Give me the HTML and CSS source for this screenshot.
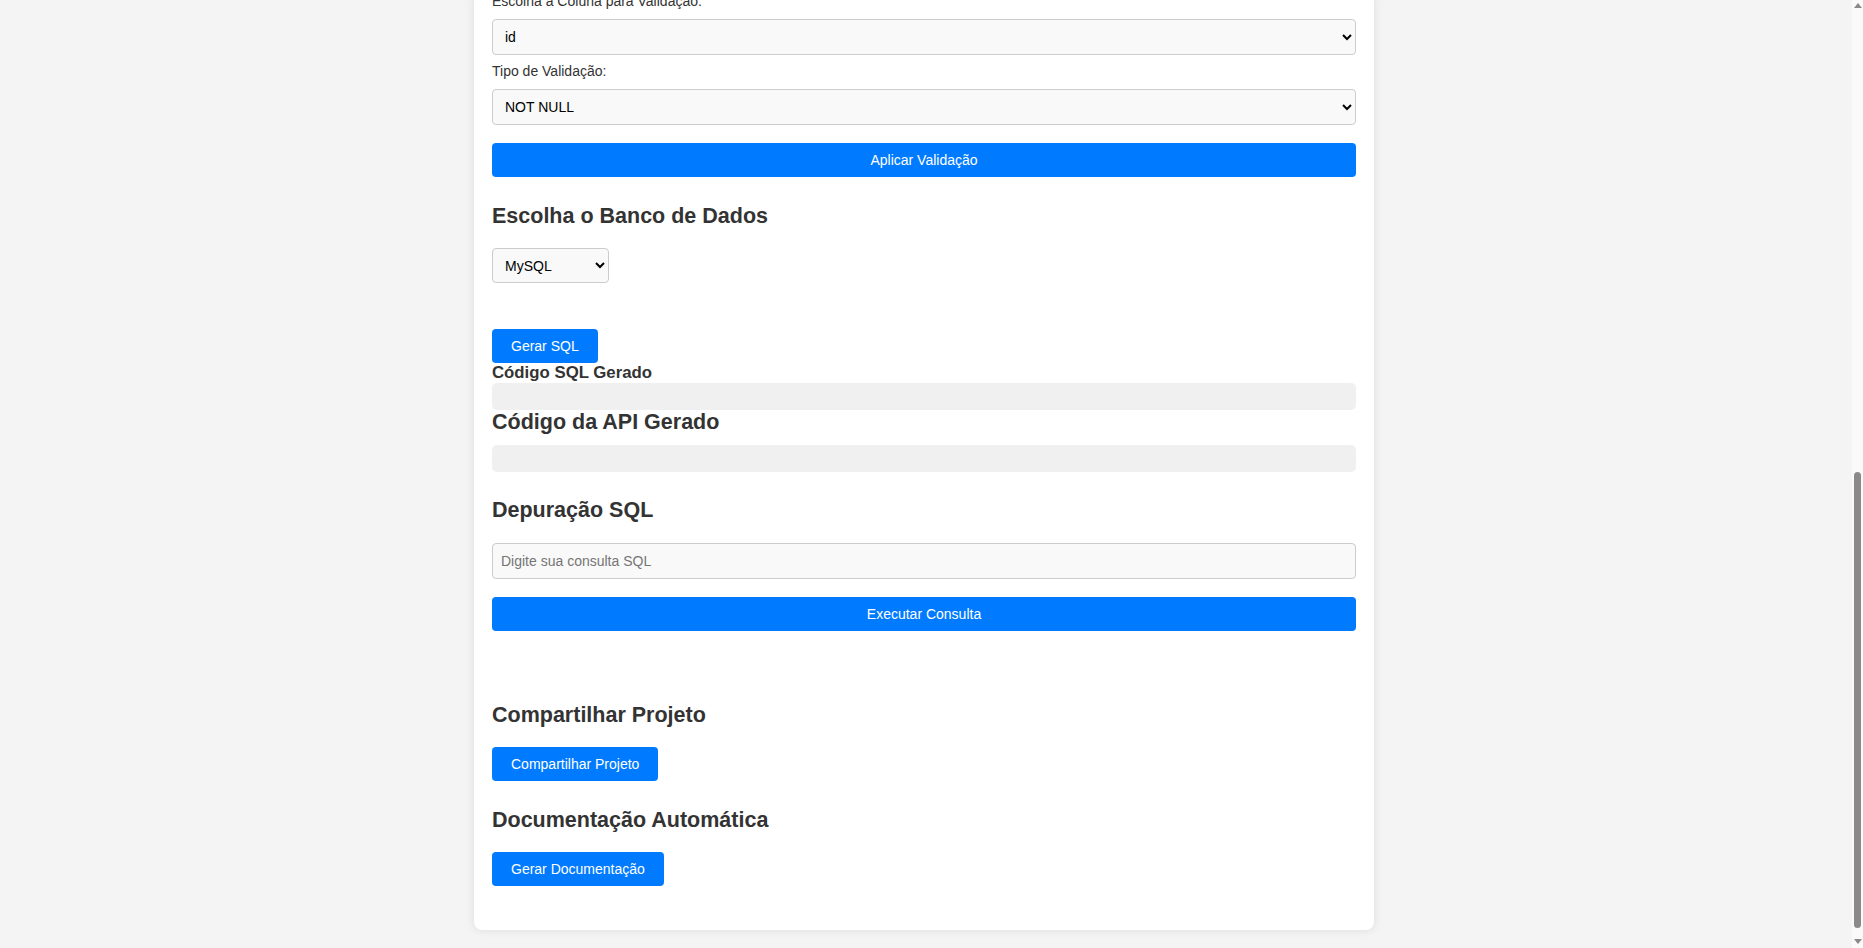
FILE: index.html
```html
<!DOCTYPE html>
<html lang="pt-BR">
<head>
<meta charset="utf-8">
<title>Gerador de API</title>
<link rel="stylesheet" href="styles.css">
</head>
<body>
<div class="viewport">
  <main class="main">
    <div class="card">
      <section class="validation">
        <label class="field-label" for="coluna">Escolha a Coluna para Validação:</label>
        <select id="coluna" class="field field-first">
          <option>id</option>
          <option>nome</option>
        </select>
        <label class="field-label" for="tipo">Tipo de Validação:</label>
        <select id="tipo" class="field field-second">
          <option>NOT NULL</option>
          <option>UNIQUE</option>
        </select>
        <button class="btn btn-block btn-apply">Aplicar Validação</button>
      </section>

      <section class="database">
        <h2 class="title title-db">Escolha o Banco de Dados</h2>
        <select class="field field-db">
          <option>MySQL</option>
          <option>PostgreSQL</option>
          <option>SQLite</option>
        </select>
        <button class="btn btn-sql">Gerar SQL</button>
        <h3 class="subtitle">Código SQL Gerado</h3>
        <pre class="code code-sql"></pre>
        <h2 class="title title-api">Código da API Gerado</h2>
        <pre class="code code-api"></pre>
      </section>

      <section class="debug">
        <h2 class="title title-debug">Depuração SQL</h2>
        <input class="field field-input" type="text" placeholder="Digite sua consulta SQL">
        <button class="btn btn-block btn-run">Executar Consulta</button>
      </section>

      <section class="share">
        <h2 class="title title-share">Compartilhar Projeto</h2>
        <button class="btn btn-share">Compartilhar Projeto</button>
      </section>

      <section class="docs">
        <h2 class="title title-docs">Documentação Automática</h2>
        <button class="btn">Gerar Documentação</button>
      </section>
    </div>
  </main>
  <div class="scrollbar">
    <div class="sb-arrow sb-up"></div>
    <div class="sb-space"></div>
    <div class="sb-thumb"></div>
    <div class="sb-arrow sb-down"></div>
  </div>
</div>
</body>
</html>
```

FILE: styles.css
```css
* {
  box-sizing: border-box;
}

html, body {
  margin: 0;
  padding: 0;
  height: 100%;
  overflow: hidden;
}

body {
  background: #f4f4f4;
  font-family: "Liberation Sans", Arial, sans-serif;
  font-size: 14px;
  color: #333;
}

.viewport {
  display: flex;
  height: 948px;
}

.main {
  flex: 1;
  overflow: hidden;
  display: flex;
  flex-direction: column;
  justify-content: flex-end;
  align-items: center;
}

.card {
  flex-shrink: 0;
  width: 900px;
  background: #fff;
  border-radius: 8px;
  box-shadow: 0 0 10px rgba(0, 0, 0, 0.1);
  padding: 0 18px 44px;
  margin-bottom: 18px;
}

section {
  display: flex;
  flex-direction: column;
  align-items: flex-start;
}

.field-label {
  display: block;
  line-height: 16px;
  margin-bottom: 10px;
  color: #333;
}

.field {
  width: 100%;
  height: 36px;
  padding: 8px;
  font-family: "Liberation Sans", Arial, sans-serif;
  font-size: 14px;
  color: #000;
  background: #f9f9f9;
  border: 1px solid #ccc;
  border-radius: 4px;
}

.field-first {
  margin-bottom: 8px;
}

.field-second {
  margin-bottom: 18px;
}

.field-db {
  width: 117px;
  height: 35px;
  margin-bottom: 46px;
}

.field-input {
  margin-bottom: 18px;
}

.field-input::placeholder {
  color: #757575;
}

.btn {
  height: 34px;
  padding: 0 19px;
  background: #007bff;
  color: #fff;
  border: none;
  border-radius: 4px;
  font-family: "Liberation Sans", Arial, sans-serif;
  font-size: 14px;
  line-height: 34px;
  cursor: pointer;
}

.btn-block {
  width: 100%;
}

.btn-apply {
  margin-bottom: 27px;
}

.btn-run {
  margin-bottom: 72px;
}

.btn-share {
  margin-bottom: 27px;
}

.title {
  margin: 0 0 20px;
  font-size: 21.5px;
  line-height: 24px;
  font-weight: bold;
  color: #333;
}

.title-api {
  margin-bottom: 11px;
}

.title-debug {
  margin-bottom: 21px;
}

.subtitle {
  margin: 0;
  font-size: 16.8px;
  line-height: 20px;
  font-weight: bold;
  color: #333;
}

.code {
  width: 100%;
  height: 27px;
  margin: 0;
  background: #f0f0f0;
  border-radius: 5px;
}

.code-api {
  margin-bottom: 26px;
}

.scrollbar {
  width: 15px;
  display: flex;
  flex-direction: column;
  align-items: center;
  border-left: 4px solid #f4f4f4;
  background-clip: padding-box;
  background-color: #fafafa;
}

.sb-arrow {
  width: 0;
  height: 0;
  border-left: 4px solid transparent;
  border-right: 4px solid transparent;
}

.sb-up {
  margin-top: 3px;
  border-bottom: 5px solid #8a8a8a;
}

.sb-down {
  margin-top: 11px;
  margin-bottom: 4px;
  border-top: 5px solid #8a8a8a;
}

.sb-space {
  flex: 1;
}

.sb-thumb {
  width: 7px;
  height: 456px;
  background: #8a8a8a;
  border-radius: 4px;
}
```
